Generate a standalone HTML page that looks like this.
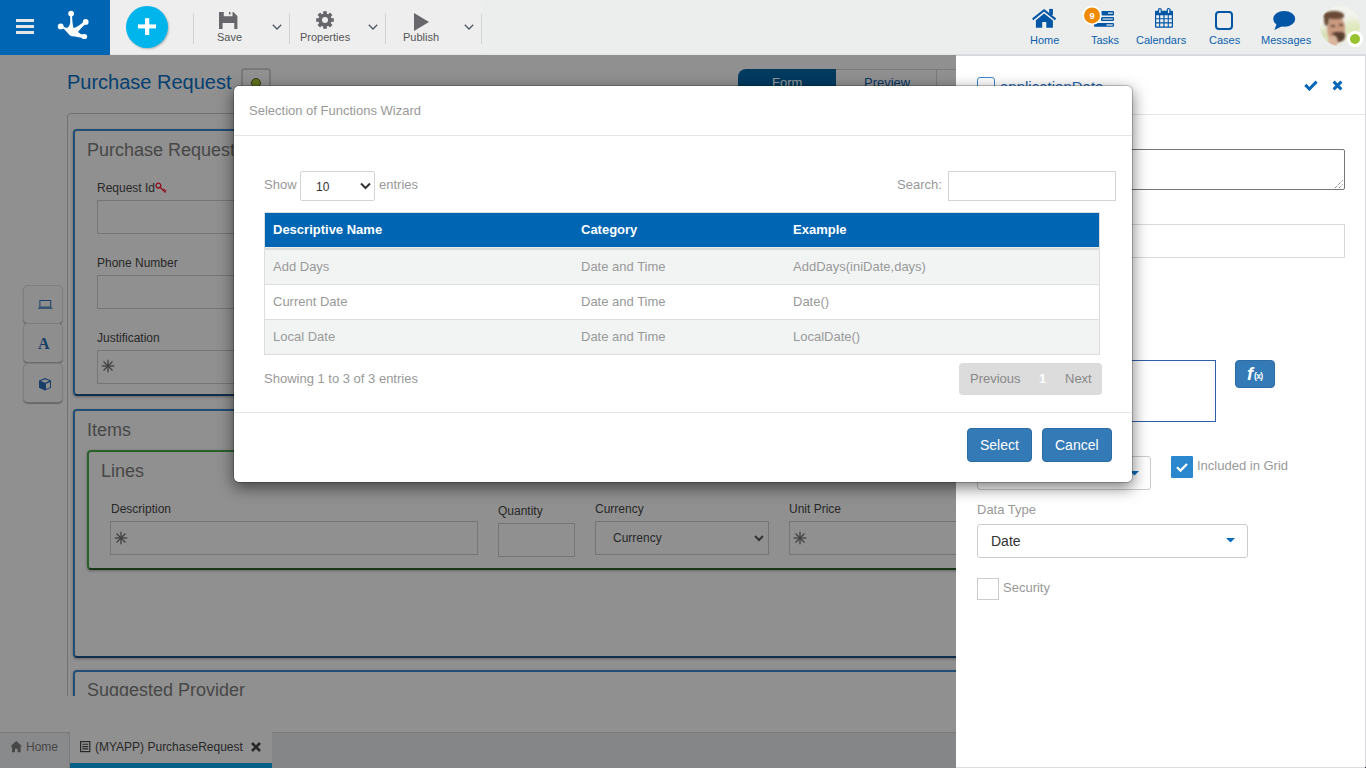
<!DOCTYPE html>
<html><head><meta charset="utf-8">
<style>
*{box-sizing:border-box;margin:0;padding:0}
html,body{width:1366px;height:768px;overflow:hidden;background:#f0f0f0;font-family:"Liberation Sans",sans-serif;position:relative}
.a{position:absolute}
.t{position:absolute;white-space:nowrap;line-height:1}
/* header */
#hdr{left:0;top:0;width:1366px;height:55px;background:#eceeee;border-bottom:1px solid #e2e4e4}
#blue{left:0;top:0;width:110px;height:55px;background:#0065b2}
.hb{left:16px;width:18px;height:3px;background:#e6e6e6}
.sep{top:14px;width:1px;height:30px;background:#d2d2d2}
.tl{font-size:11px;color:#555;top:32px}
.tr{font-size:11px;color:#0b5fad;top:35px}
.chev{width:7px;height:7px;border-right:1.5px solid #666;border-bottom:1.5px solid #666;transform:rotate(45deg)}
/* page */
#page{left:0;top:55px;width:956px;height:713px;background:#f0f0f0;overflow:hidden}
#ov{left:0;top:55px;width:956px;height:713px;background:rgba(0,0,0,0.4)}
/* modal */
#modal{left:233px;top:85px;width:900px;height:398px;background:#fff;border:1px solid rgba(0,0,0,.2);border-radius:6px;box-shadow:0 5px 15px rgba(0,0,0,.5);background-clip:padding-box}
.mt{font-size:13px;color:#999}
.row{left:31px;width:834px;height:35px;border-bottom:1px solid #dddddd}
.btn{background:#337ab7;border:1px solid #2e6da4;border-radius:4px;color:#fff;font-size:14px;text-align:center}
/* right panel */
#rp{left:956px;top:55px;width:410px;height:713px;background:#fff}
.inp{border:1px solid #c4c4c4;background:#f0f0f0}
.lab{font-size:12px;color:#444}
.card{border:2px solid #3a80c3;border-bottom-color:#1d4f80;border-radius:4px;box-shadow:0 1px 3px rgba(0,0,0,.3)}
.green{border-color:#46a046;border-bottom-color:#2a5a2a}
.tb{width:40px;height:39px;border:1px solid #d2d2d2;border-bottom-color:#b4b4b4;border-radius:5px;background:#ededed;box-shadow:0 1px 1px rgba(0,0,0,.3)}
.lbl{font-size:13px;color:#999}
</style></head>
<body>
<!-- PAGE -->
<div id="page" class="a">
  <div class="t" style="left:67px;top:17px;font-size:20px;color:#0a6cbc">Purchase Request</div>
  <div class="a" style="left:241px;top:13px;width:30px;height:32px;border:2px solid #cacaca;border-radius:4px;background:#f2f2f2">
    <div class="a" style="left:8px;top:8px;width:10px;height:10px;border-radius:50%;background:#9ebf32;border:1px solid #56641c"></div>
  </div>
  <div class="a" style="left:738px;top:14px;width:98px;height:40px;background:#00629f;border-radius:8px 0 0 0"></div>
  <div class="t" style="left:772px;top:21px;font-size:13px;color:#fff">Form</div>
  <div class="a" style="left:836px;top:14px;width:101px;height:40px;background:#f0f0f0;border:1px solid #ccc;border-left:none"></div>
  <div class="t" style="left:864px;top:21px;font-size:13px;color:#0a5ca8">Preview</div>
  <div class="a" style="left:937px;top:14px;width:40px;height:40px;background:#f0f0f0;border:1px solid #ccc;border-left:none"></div>
  <!-- outer container -->
  <div class="a" style="left:67px;top:58px;width:920px;height:700px;border:1px solid #bdbdbd;border-radius:4px"></div>
  <!-- left toolbar -->
  <div class="a tb" style="left:23px;top:230px"></div>
  <div class="a tb" style="left:23px;top:268px;height:40px"></div>
  <div class="a tb" style="left:23px;top:308px;height:40px"></div>
  <svg class="a" style="left:38px;top:245px" width="15" height="9" viewBox="0 0 15 9"><rect x="1.9" y="0.5" width="10.8" height="6.6" fill="none" stroke="#2868ac" stroke-width="1"/><rect x="0" y="7.6" width="14.5" height="1.1" fill="#2868ac"/></svg>
  <div class="t" style="left:38px;top:281px;font-family:'Liberation Serif',serif;font-weight:bold;font-size:16px;color:#2868ac">A</div>
  <svg class="a" style="left:38px;top:323px" width="14" height="13" viewBox="0 0 14 13"><path d="M7 0 L13 2.5 V9.8 L7 12.5 L1 9.8 V2.5 Z" fill="#2868ac"/><path d="M7 1.3 L11.3 3 L7 4.8 L2.7 3 Z M8 5.8 L12 4.2 V9.2 L8 11 Z" fill="#f0f0f0"/></svg>
  <!-- card 1 -->
  <div class="a card" style="left:73px;top:74px;width:900px;height:267px"></div>
  <div class="t" style="left:87px;top:86px;font-size:18px;color:#777">Purchase Request</div>
  <div class="t lab" style="left:97px;top:127px">Request Id</div>
  <svg class="a" style="left:155px;top:127px" width="12" height="12" viewBox="0 0 12 12"><circle cx="3.4" cy="3.6" r="2.4" fill="none" stroke="#f01424" stroke-width="1.3"/><path d="M5.1 5.3 L10.6 10.4 M8.4 8.3 L9.6 7.1 M9.7 9.5 L10.9 8.3" stroke="#f01424" stroke-width="1.3" fill="none"/></svg>
  <div class="a inp" style="left:97px;top:145px;width:300px;height:34px"></div>
  <div class="t lab" style="left:97px;top:202px">Phone Number</div>
  <div class="a inp" style="left:97px;top:220px;width:300px;height:34px"></div>
  <div class="t lab" style="left:97px;top:277px">Justification</div>
  <div class="a inp" style="left:97px;top:295px;width:300px;height:34px"></div>
  <svg class="a" style="left:101px;top:304px" width="14" height="14" viewBox="-7 -7 14 14"><g stroke="#6a6a6a" stroke-width="1.3"><line x1="0" y1="-6.3" x2="0" y2="6.3"/><line x1="-6.3" y1="0" x2="6.3" y2="0"/><line x1="-4.5" y1="-4.5" x2="4.5" y2="4.5"/><line x1="-4.5" y1="4.5" x2="4.5" y2="-4.5"/></g></svg>
  <!-- card items -->
  <div class="a card" style="left:73px;top:354px;width:900px;height:249px"></div>
  <div class="t" style="left:87px;top:366px;font-size:18px;color:#777">Items</div>
  <div class="a card green" style="left:87px;top:395px;width:900px;height:120px"></div>
  <div class="t" style="left:101px;top:407px;font-size:18px;color:#777">Lines</div>
  <div class="t lab" style="left:111px;top:448px">Description</div>
  <div class="a inp" style="left:110px;top:466px;width:368px;height:34px"></div>
  <svg class="a" style="left:114px;top:476px" width="14" height="14" viewBox="-7 -7 14 14"><g stroke="#6a6a6a" stroke-width="1.3"><line x1="0" y1="-6.3" x2="0" y2="6.3"/><line x1="-6.3" y1="0" x2="6.3" y2="0"/><line x1="-4.5" y1="-4.5" x2="4.5" y2="4.5"/><line x1="-4.5" y1="4.5" x2="4.5" y2="-4.5"/></g></svg>
  <div class="t lab" style="left:498px;top:450px">Quantity</div>
  <div class="a inp" style="left:498px;top:468px;width:77px;height:34px"></div>
  <div class="t lab" style="left:595px;top:448px">Currency</div>
  <div class="a inp" style="left:595px;top:466px;width:174px;height:34px"></div>
  <div class="t lab" style="left:613px;top:477px">Currency</div>
  <svg class="a" style="left:754px;top:480px" width="10" height="7" viewBox="0 0 10 7"><path d="M1 1 L5 5 L9 1" fill="none" stroke="#555" stroke-width="2"/></svg>
  <div class="t lab" style="left:789px;top:448px">Unit Price</div>
  <div class="a inp" style="left:789px;top:466px;width:300px;height:34px"></div>
  <svg class="a" style="left:793px;top:476px" width="14" height="14" viewBox="-7 -7 14 14"><g stroke="#6a6a6a" stroke-width="1.3"><line x1="0" y1="-6.3" x2="0" y2="6.3"/><line x1="-6.3" y1="0" x2="6.3" y2="0"/><line x1="-4.5" y1="-4.5" x2="4.5" y2="4.5"/><line x1="-4.5" y1="4.5" x2="4.5" y2="-4.5"/></g></svg>
  <!-- suggested provider -->
  <div class="a card" style="left:73px;top:615px;width:900px;height:100px"></div>
  <div class="t" style="left:87px;top:626px;font-size:18px;color:#777">Suggested Provider</div>
  <div class="a" style="left:0;top:641px;width:956px;height:36px;background:#f0f0f0"></div>
  <!-- bottom tabs -->
  <div class="a" style="left:0;top:677px;width:956px;height:36px;background:#dde0e3;border-top:1px solid #ccc"></div>
  <div class="a" style="left:0;top:677px;width:70px;height:36px;background:#e5e6e8;border-top:1px solid #ccc;border-right:1px solid #ccc;border-top-right-radius:3px"></div>
  <svg class="a" style="left:10px;top:686px" width="13" height="12" viewBox="0 0 13 12"><path d="M6.2 0 L12.2 5.4 H10.6 V11.3 H7.6 V7.8 H5 V11.3 H2 V5.4 H0.2 Z" fill="#777"/></svg>
  <div class="t" style="left:26px;top:686px;font-size:12px;color:#777">Home</div>
  <div class="a" style="left:70px;top:677px;width:202px;height:36px;background:#f0f0f0;border-bottom:5px solid #0a9fdc"></div>
  <svg class="a" style="left:80px;top:686px" width="11" height="12" viewBox="0 0 11 12"><rect x="0.6" y="0.6" width="9.2" height="10" fill="none" stroke="#444" stroke-width="1.2"/><path d="M2.3 3.3 H8.2 M2.3 5.6 H8.2 M2.3 7.9 H8.2" stroke="#444" stroke-width="1.1"/></svg>
  <div class="t" style="left:95px;top:686px;font-size:12px;color:#444">(MYAPP) PurchaseRequest</div>
  <svg class="a" style="left:251px;top:687px" width="10" height="10" viewBox="0 0 10 10"><path d="M1 1 L9 9 M9 1 L1 9" stroke="#444" stroke-width="2.6"/></svg>
</div>
<div id="ov" class="a"></div>

<!-- RIGHT PANEL -->
<div id="rp" class="a">
  <div class="a" style="left:0;top:0;width:410px;height:1px;background:#d3d8dc"></div>
  <div class="a" style="left:409px;top:0;width:1px;height:712px;background:#d8d9dd"></div>
  <div class="a" style="left:0;top:712px;width:409px;height:1px;background:#dcdde0"></div>
  <div class="a" style="left:409px;top:712px;width:1px;height:1px;background:#202030"></div>
  <div class="a" style="left:21px;top:22px;width:18px;height:18px;border:1.5px solid #3d86c6;border-radius:3px"></div>
  <div class="t" style="left:44px;top:24px;font-size:15px;color:#1a64ad">applicationDate</div>
  <svg class="a" style="left:348px;top:25px" width="14" height="11" viewBox="0 0 14 11"><path d="M1.3 4.9 L5.4 9 L12.6 1.6" fill="none" stroke="#0867b6" stroke-width="3"/></svg>
  <svg class="a" style="left:376px;top:25px" width="11" height="11" viewBox="0 0 11 11"><path d="M1.6 1.6 L9.4 9.4 M9.4 1.6 L1.6 9.4" fill="none" stroke="#0867b6" stroke-width="2.9"/></svg>
  <div class="a" style="left:0;top:59px;width:409px;height:1px;background:#e5e5e5"></div>
  <div class="a" style="left:21px;top:94px;width:368px;height:41px;border:1px solid #767676;border-radius:2px"></div>
  <svg class="a" style="left:378px;top:124px" width="10" height="10" viewBox="0 0 10 10"><path d="M1 9 L8.5 1.5 M5 9 L8.5 5.5" stroke="#555" stroke-width="1" stroke-dasharray="1 1"/></svg>
  <div class="a" style="left:21px;top:169px;width:368px;height:34px;border:1px solid #d9d9d9"></div>
  <div class="a" style="left:21px;top:305px;width:239px;height:62px;border:1px solid #2e5fa8"></div>
  <div class="a" style="left:279px;top:305px;width:40px;height:28px;background:#337ab7;border:1px solid #2e6da4;border-radius:4px"></div>
  <div class="t" style="left:291px;top:310px;font-size:18px;font-weight:bold;font-style:italic;color:#fff">f</div>
  <div class="t" style="left:298px;top:317px;font-size:8.5px;font-weight:bold;color:#fff;letter-spacing:-0.6px">(x)</div>
  <div class="a" style="left:21px;top:401px;width:174px;height:34px;border:1px solid #ccc;border-radius:3px"></div>
  <svg class="a" style="left:174px;top:416px" width="9" height="5" viewBox="0 0 9 5"><path d="M0 0 H9 L4.5 4.5 Z" fill="#0a6ac0"/></svg>
  <div class="a" style="left:215px;top:401px;width:22px;height:22px;background:#2b88cf;border-radius:1px"></div>
  <svg class="a" style="left:215px;top:401px" width="22" height="22" viewBox="0 0 22 22"><path d="M6 11.3 L9.5 14.6 L16 8" fill="none" stroke="#fff" stroke-width="2.2"/></svg>
  <div class="t lbl" style="left:241px;top:404px">Included in Grid</div>
  <div class="t lbl" style="left:21px;top:448px">Data Type</div>
  <div class="a" style="left:21px;top:469px;width:271px;height:34px;border:1px solid #ccc;border-radius:3px"></div>
  <div class="t" style="left:35px;top:479px;font-size:14px;color:#333">Date</div>
  <svg class="a" style="left:270px;top:483px" width="9" height="5" viewBox="0 0 9 5"><path d="M0 0 H9 L4.5 4.5 Z" fill="#0a6ac0"/></svg>
  <div class="a" style="left:21px;top:523px;width:22px;height:22px;border:1px solid #ccc"></div>
  <div class="t lbl" style="left:47px;top:526px">Security</div>
</div>

<!-- HEADER -->
<div id="hdr" class="a">
  <div id="blue" class="a">
    <div class="a hb" style="top:19px"></div>
    <div class="a hb" style="top:25px"></div>
    <div class="a hb" style="top:31px"></div>
    <svg class="a" style="left:50px;top:5px" width="50" height="40" viewBox="0 0 50 40">
      <g fill="#fff">
        <circle cx="21.1" cy="8.6" r="2.9"/>
        <circle cx="10.7" cy="21.4" r="2.9"/>
        <circle cx="35.7" cy="16.9" r="2.9"/>
        <ellipse cx="34.3" cy="31.5" rx="2.9" ry="2.6"/>
        <path d="M20.2 9 L22 9 Q22.3 19 23.5 23 Q28 22 34.5 16 L36.5 18 Q30 24 28 27 Q29.5 29 34 30 L34 33 Q28 32 25 31.5 Q21 31.5 19.5 30 Q16 26 14 24 Q11 23 10.5 22 L11.5 20.5 Q15 22.5 17 23 Q20 21 20.2 18 Z"/>
      </g>
    </svg>
  </div>
  <div class="a" style="left:110px;top:0;width:372px;height:54px;background:#eeeeee"></div>
  <div class="a" style="left:956px;top:54px;width:410px;height:1px;background:#d9dde0"></div>
  <div class="a" style="left:126px;top:6px;width:42px;height:42px;border-radius:50%;background:#00b4ec;box-shadow:1px 1px 2px rgba(0,0,0,.25)">
    <svg class="a" style="left:0;top:0" width="42" height="42" viewBox="0 0 42 42"><rect x="19" y="12.2" width="4.2" height="16.8" fill="#fff"/><rect x="12" y="18.4" width="18" height="4" fill="#fff"/></svg>
  </div>
  <div class="a sep" style="left:193px"></div>
  <div class="a sep" style="left:289px"></div>
  <div class="a sep" style="left:385px"></div>
  <div class="a sep" style="left:481px"></div>
  <svg class="a" style="left:219px;top:12px" width="19" height="17" viewBox="0 0 19 17">
    <path fill="#67666b" fill-rule="evenodd" d="M0 0 H4.8 V4.3 H13.5 V0 H14.3 L18.4 4 V17 H15.3 V11 H3.6 V17 H0 Z"/>
    <rect x="10" y="0" width="1.5" height="2.5" fill="#67666b"/>
  </svg>
  <svg class="a" style="left:316px;top:11px" width="18" height="18" viewBox="-9 -9 18 18">
    <g fill="#67666b">
      <circle r="6.6"/>
      <g id="tooth"><rect x="-1.8" y="-8.8" width="3.6" height="4"/></g>
      <use href="#tooth" transform="rotate(45)"/><use href="#tooth" transform="rotate(90)"/><use href="#tooth" transform="rotate(135)"/>
      <use href="#tooth" transform="rotate(180)"/><use href="#tooth" transform="rotate(225)"/><use href="#tooth" transform="rotate(270)"/><use href="#tooth" transform="rotate(315)"/>
    </g>
    <circle r="3" fill="#eeeeee"/>
  </svg>
  <svg class="a" style="left:414px;top:13px" width="16" height="18" viewBox="0 0 16 18"><path d="M0 0 L15 8.9 L0 17.9 Z" fill="#67666b"/></svg>
  <div class="t tl" style="left:217px">Save</div>
  <div class="t tl" style="left:300px">Properties</div>
  <div class="t tl" style="left:403px">Publish</div>
  <svg class="a" style="left:272px;top:24px" width="10" height="7" viewBox="0 0 10 7"><path d="M0.8 0.8 L5 5 L9.2 0.8" fill="none" stroke="#4d5666" stroke-width="1.3"/></svg>
  <svg class="a" style="left:368px;top:24px" width="10" height="7" viewBox="0 0 10 7"><path d="M0.8 0.8 L5 5 L9.2 0.8" fill="none" stroke="#4d5666" stroke-width="1.3"/></svg>
  <svg class="a" style="left:464px;top:24px" width="10" height="7" viewBox="0 0 10 7"><path d="M0.8 0.8 L5 5 L9.2 0.8" fill="none" stroke="#4d5666" stroke-width="1.3"/></svg>
  <!-- right icons -->
  <svg class="a" style="left:1030px;top:7px" width="28" height="22" viewBox="0 0 28 22">
    <g fill="#0256a5">
      <path d="M2 11.6 L14.1 1.9 L26.2 11.6 L24.9 13.2 L14.1 4.6 L3.3 13.2 Z"/>
      <rect x="19.2" y="1.9" width="3.7" height="6"/>
      <path d="M5.9 13.2 L14.1 6.6 L22.9 13.6 V20.8 H16.3 V14.9 H12.2 V20.8 H5.9 Z"/>
    </g>
  </svg>
  <svg class="a" style="left:1082px;top:5px" width="34" height="24" viewBox="0 0 34 24">
    <g fill="#0256a5">
      <rect x="19.3" y="6" width="12.7" height="4.5" rx="1"/>
      <rect x="19" y="12" width="13" height="4" rx="1"/>
      <rect x="12" y="18.1" width="20" height="3.7" rx="1"/>
    </g>
    <g fill="#eef0f0">
      <rect x="26" y="7.5" width="4.8" height="1.2"/>
      <rect x="20.5" y="13.5" width="10.3" height="1.1"/>
      <rect x="24.5" y="19.4" width="6.3" height="1.2"/>
    </g>
    <circle cx="10" cy="10.4" r="9.6" fill="#fff"/>
    <circle cx="10" cy="10.4" r="8" fill="#f08a00"/>
    <text x="10.2" y="14" font-family="Liberation Sans" font-size="9.5" font-weight="bold" fill="#fff" text-anchor="middle">9</text>
  </svg>
  <svg class="a" style="left:1155px;top:8px" width="19" height="20" viewBox="0 0 19 20">
    <path fill="#0256a5" fill-rule="evenodd" d="M0 3.4 Q0 2.7 0.7 2.7 H3 V1.5 Q3 0 4.8 0 Q6.8 0 6.8 1.5 V2.7 H11.7 V1.5 Q11.7 0 13.5 0 Q15.6 0 15.6 1.5 V2.7 H17.2 Q18 2.7 18 3.4 V19 Q18 19.8 17.2 19.8 H0.8 Q0 19.8 0 19 Z
      M4.2 1.2 H5.6 V5 H4.2 Z M12.9 1.2 H14.3 V5 H12.9 Z
      M1.2 7.3 H4.1 V10.2 H1.2 Z M5.2 7.3 H8.4 V10.2 H5.2 Z M9.6 7.3 H12.7 V10.2 H9.6 Z M13.8 7.3 H16.8 V10.2 H13.8 Z
      M1.2 11.3 H4.1 V14.3 H1.2 Z M5.2 11.3 H8.4 V14.3 H5.2 Z M9.6 11.3 H12.7 V14.3 H9.6 Z M13.8 11.3 H16.8 V14.3 H13.8 Z
      M1.2 15.4 H4.1 V18.6 H1.2 Z M5.2 15.4 H8.4 V18.6 H5.2 Z M9.6 15.4 H12.7 V18.6 H9.6 Z M13.8 15.4 H16.8 V18.6 H13.8 Z"/>
  </svg>
  <div class="a" style="left:1215px;top:11px;width:18px;height:19px;border:2.2px solid #0256a5;border-radius:4px"></div>
  <svg class="a" style="left:1272px;top:10px" width="25" height="21" viewBox="0 0 25 21">
    <ellipse cx="12.2" cy="8.9" rx="11" ry="7.9" fill="#0256a5"/>
    <path d="M5 13 L2.4 20 L10 16.3 Z" fill="#0256a5"/>
  </svg>
  <div class="t tr" style="left:1030px">Home</div>
  <div class="t tr" style="left:1091px">Tasks</div>
  <div class="t tr" style="left:1136px">Calendars</div>
  <div class="t tr" style="left:1209px">Cases</div>
  <div class="t tr" style="left:1261px">Messages</div>
  <div class="a" style="left:1320px;top:6px;width:40px;height:40px;border-radius:50%;overflow:hidden;background:#f3f4ee">
    <div class="a" style="left:22px;top:14px;width:24px;height:20px;border-radius:50%;background:#dfe7bd;filter:blur(3px)"></div>
    <div class="a" style="left:-4px;top:22px;width:14px;height:18px;border-radius:50%;background:#d3deb0;filter:blur(3px)"></div>
    <div class="a" style="left:7px;top:10px;width:18px;height:27px;border-radius:45% 45% 50% 50%;background:#c99a80;filter:blur(1px)"></div>
    <div class="a" style="left:4px;top:5px;width:20px;height:8px;border-radius:50% 50% 30% 30%;background:#6a4a36;filter:blur(1px)"></div>
    <div class="a" style="left:4px;top:8px;width:5px;height:12px;border-radius:50%;background:#6a4a36;filter:blur(1px)"></div>
    <div class="a" style="left:12px;top:26px;width:13px;height:10px;border-radius:30% 30% 50% 50%;background:#5a4030;filter:blur(1px)"></div>
    <div class="a" style="left:11px;top:19px;width:4px;height:2px;background:#6a4838;filter:blur(.8px)"></div>
    <div class="a" style="left:19px;top:18px;width:4px;height:2px;background:#6a4838;filter:blur(.8px)"></div>
    <div class="a" style="left:8px;top:29px;width:10px;height:14px;border-radius:50%;background:#d9b59c;filter:blur(1px)"></div>
    <div class="a" style="left:16px;top:37px;width:16px;height:8px;border-radius:50%;background:#e8e8e4;filter:blur(1px)"></div>
  </div>
  <div class="a" style="left:1347px;top:31px;width:16px;height:16px;border-radius:50%;background:#fff"></div>
  <div class="a" style="left:1350px;top:34px;width:10px;height:10px;border-radius:50%;background:#99c22f"></div>
</div>

<!-- MODAL -->
<div id="modal" class="a"><div class="a" style="left:0;top:0;width:898px;height:396px">
  <div class="t mt" style="left:15px;top:18px">Selection of Functions Wizard</div>
  <div class="a" style="left:0;top:49px;width:898px;height:1px;background:#e5e5e5"></div>
  <div class="t mt" style="left:30px;top:92px">Show</div>
  <div class="a" style="left:66px;top:85px;width:75px;height:30px;border:1px solid #d5d5d5;border-radius:2px"></div>
  <div class="t" style="left:82px;top:95px;font-size:12px;color:#333">10</div>
  <svg class="a" style="left:126px;top:96px" width="11" height="8" viewBox="0 0 11 8"><path d="M1 1.5 L5.5 6 L10 1.5" fill="none" stroke="#333" stroke-width="2"/></svg>
  <div class="t mt" style="left:145px;top:92px">entries</div>
  <div class="t mt" style="left:663px;top:92px">Search:</div>
  <div class="a" style="left:714px;top:85px;width:168px;height:30px;border:1px solid #d5d5d5"></div>
  <div class="a" style="left:30px;top:126px;width:836px;height:143px;border:1px solid #dddddd"></div>
  <div class="a" style="left:31px;top:127px;width:834px;height:34px;background:#0065b3"></div>
  <div class="a" style="left:31px;top:161px;width:834px;height:1px;background:#ededed"></div>
  <div class="a" style="left:31px;top:162px;width:834px;height:2px;background:#dadada"></div>
  <div class="t" style="left:39px;top:137px;font-size:13px;color:#fff;font-weight:bold">Descriptive Name</div>
  <div class="t" style="left:347px;top:137px;font-size:13px;color:#fff;font-weight:bold">Category</div>
  <div class="t" style="left:559px;top:137px;font-size:13px;color:#fff;font-weight:bold">Example</div>
  <div class="a row" style="top:164px;background:#f2f4f4"></div>
  <div class="a row" style="top:199px;background:#fff"></div>
  <div class="a row" style="top:234px;background:#f2f4f4"></div>
  <div class="t mt" style="left:39px;top:174px">Add Days</div>
  <div class="t mt" style="left:347px;top:174px">Date and Time</div>
  <div class="t mt" style="left:559px;top:174px">AddDays(iniDate,days)</div>
  <div class="t mt" style="left:39px;top:209px">Current Date</div>
  <div class="t mt" style="left:347px;top:209px">Date and Time</div>
  <div class="t mt" style="left:559px;top:209px">Date()</div>
  <div class="t mt" style="left:39px;top:244px">Local Date</div>
  <div class="t mt" style="left:347px;top:244px">Date and Time</div>
  <div class="t mt" style="left:559px;top:244px">LocalDate()</div>
  <div class="t mt" style="left:30px;top:286px">Showing 1 to 3 of 3 entries</div>
  <div class="a" style="left:725px;top:277px;width:143px;height:32px;background:#dcdcdc;border-radius:4px"></div>
  <div class="t mt" style="left:736px;top:286px;color:#888">Previous</div>
  <div class="t mt" style="left:805px;top:286px;color:#fcfcfc;font-weight:bold">1</div>
  <div class="t mt" style="left:831px;top:286px;color:#888">Next</div>
  <div class="a" style="left:0;top:326px;width:898px;height:1px;background:#e5e5e5"></div>
  <div class="a btn" style="left:733px;top:342px;width:65px;height:34px"></div>
  <div class="a btn" style="left:808px;top:342px;width:70px;height:34px"></div>
  <div class="t" style="left:746px;top:352px;font-size:14px;color:#fff">Select</div>
  <div class="t" style="left:821px;top:352px;font-size:14px;color:#fff">Cancel</div>
</div></div>
</body></html>
